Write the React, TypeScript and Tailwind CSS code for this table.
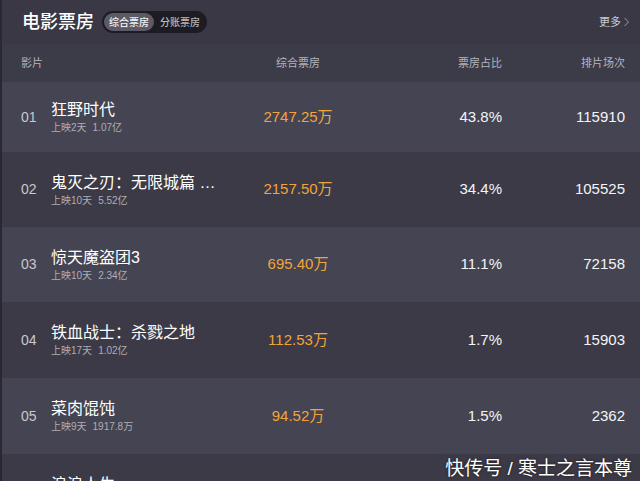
const rows = [
  { no: "01", name: "狂野时代", days: "上映2天", total: "1.07亿", box: "2747.25万", rate: "43.8%", shows: "115910", h: "h-[70px]" },
  { no: "02", name: "鬼灭之刃：无限城篇 …", days: "上映10天", total: "5.52亿", box: "2157.50万", rate: "34.4%", shows: "105525", h: "h-[75px]" },
  { no: "03", name: "惊天魔盗团3", days: "上映10天", total: "2.34亿", box: "695.40万", rate: "11.1%", shows: "72158", h: "h-[75px]" },
  { no: "04", name: "铁血战士：杀戮之地", days: "上映17天", total: "1.02亿", box: "112.53万", rate: "1.7%", shows: "15903", h: "h-[76px]" },
  { no: "05", name: "菜肉馄饨", days: "上映9天", total: "1917.8万", box: "94.52万", rate: "1.5%", shows: "2362", h: "h-[76px]" },
  { no: "06", name: "浪浪人生", days: "上映12天", total: "3.05亿", box: "60.12万", rate: "1.0%", shows: "1880", h: "h-[76px]" },
];

const font = { fontFamily: '"Liberation Sans", "Noto Sans CJK SC", sans-serif' };

export default function App() {
  return (
    <main
      style={font}
      className="relative h-[481px] w-[640px] overflow-hidden border-l-2 border-[#2a2932] bg-[#3a3945] text-white"
    >
      <div className="flex h-[44px] items-center justify-between bg-[#393844] pl-[20px] pr-[10px]">
        <div className="flex items-center">
          <h1 className="text-[18px] font-medium leading-none">电影票房</h1>
          <div className="ml-[8px] flex h-[22px] items-center rounded-full bg-[#1d1c23] px-[2px] text-[10px] font-medium">
            <span className="flex h-[18px] items-center rounded-full bg-[#5b5a65] px-[5px] text-[#f2f2f2]">
              综合票房
            </span>
            <span className="pl-[6px] pr-[5px] text-[#b5b5bc]">分账票房</span>
          </div>
        </div>
        <a className="flex items-center text-[11px] text-[#c9c9cf]">
          更多
          <svg width="7" height="10" viewBox="0 0 7 10" className="ml-[2px]">
            <path d="M1.5 1 L5.5 5 L1.5 9" fill="none" stroke="#9b9ba3" strokeWidth="1" />
          </svg>
        </a>
      </div>

      <div className="grid h-[38px] grid-cols-[236px_120px_144px_1fr] items-center bg-[#3c3b48] pr-[15px] text-[11px] text-[#b4b4bc]">
        <span className="pl-[19px]">影片</span>
        <span className="text-center">综合票房</span>
        <span className="text-right">票房占比</span>
        <span className="text-right">排片场次</span>
      </div>

      {rows.map((r, i) => (
        <div
          key={r.no}
          className={`grid ${r.h} grid-cols-[236px_120px_144px_1fr] items-center pr-[15px] ${
            i % 2 === 0 ? "bg-[#454452]" : "bg-[#3b3a46]"
          }`}
        >
          <div className="flex items-center pl-[19px]">
            <span className="w-[30px] text-[14px] text-[#c8c8ce]">{r.no}</span>
            <div className="flex flex-col">
              <span className="whitespace-nowrap text-[16px] leading-[20px] text-white">{r.name}</span>
              <span className="mt-[2px] text-[10px] leading-[12px] text-[#aeaeb6]">
                {r.days}
                <span className="ml-[6px]">{r.total}</span>
              </span>
            </div>
          </div>
          <span className="text-center text-[15px] text-[#f2a43a]">{r.box}</span>
          <span className="text-right text-[15px] text-[#f4f4f6]">{r.rate}</span>
          <span className="text-right text-[15px] text-[#f4f4f6]">{r.shows}</span>
        </div>
      ))}

      <div className="absolute bottom-[3px] right-[8px] text-[19px] leading-none text-white [text-shadow:0_0_3px_rgba(0,0,0,0.6)]">
        快传号 / 寒士之言本尊
      </div>
    </main>
  );
}
